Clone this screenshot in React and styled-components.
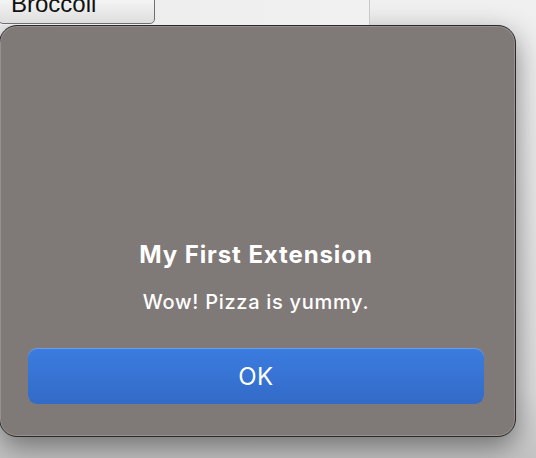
import React from "react";
import styled, { createGlobalStyle } from "styled-components";

const Global = createGlobalStyle`
  html, body {
    margin: 0;
    padding: 0;
    width: 536px;
    height: 458px;
    overflow: hidden;
    background: #ececec;
    font-family: Inter, "Noto Sans", "Liberation Sans", sans-serif;
  }
`;

const Screen = styled.div`
  width: 536px;
  height: 458px;
  overflow: hidden;
  background: linear-gradient(180deg, #f0f0f0 0%, #dcdcdc 85%, #c4c4c4 100%);
`;

const Backdrop = styled.div`
  display: flex;
  height: 25px;
  overflow: hidden;
`;

const Pane = styled.div`
  width: 369px;
  height: 100%;
  border-right: 1px solid #c9c9c9;
  background: linear-gradient(90deg, #ebebeb, #f1f1f1);
`;

const FruitButton = styled.div`
  width: 157px;
  height: 32px;
  margin-top: -8px;
  margin-left: -2px;
  box-sizing: border-box;
  padding-left: 12px;
  border: 1px solid #6f6f6f;
  border-radius: 5px;
  background: linear-gradient(180deg, #fafafa, #dedede);
  font-family: "Liberation Sans", Arial, sans-serif;
  font-size: 24px;
  line-height: 22px;
  color: #111;
`;

const Dialog = styled.div`
  width: 517px;
  height: 412px;
  margin-left: -1px;
  box-sizing: border-box;
  border: 1px solid #2a2a2a;
  border-radius: 18px;
  background: #7f7978;
  box-shadow: inset 0 0 0 1px rgba(255, 255, 255, 0.18),
    0 10px 28px rgba(0, 0, 0, 0.45);
  display: flex;
  flex-direction: column;
  justify-content: flex-end;
  align-items: center;
  padding: 0 31px 32px 28px;
  color: #fff;
`;

const Title = styled.h1`
  margin: 0;
  font-size: 24px;
  font-weight: 700;
  line-height: 28px;
  letter-spacing: 0.9px;
`;

const Message = styled.p`
  margin: 21px 0 34px;
  font-size: 20px;
  font-weight: 500;
  line-height: 24px;
  letter-spacing: 0.7px;
`;

const OkButton = styled.button`
  width: 100%;
  height: 56px;
  border: none;
  border-radius: 9px;
  background: linear-gradient(180deg, #3b7ce0 0%, #336bc7 100%);
  box-shadow: inset 0 1px 0 rgba(255, 255, 255, 0.25);
  color: #fff;
  font-family: Inter, "Noto Sans", sans-serif;
  font-size: 24px;
  font-weight: 400;
  letter-spacing: 0.5px;
`;

export default function App() {
  return (
    <Screen>
      <Global />
      <Backdrop>
        <Pane>
          <FruitButton>Broccoli</FruitButton>
        </Pane>
      </Backdrop>
      <Dialog>
        <Title>My First Extension</Title>
        <Message>Wow! Pizza is yummy.</Message>
        <OkButton>OK</OkButton>
      </Dialog>
    </Screen>
  );
}
